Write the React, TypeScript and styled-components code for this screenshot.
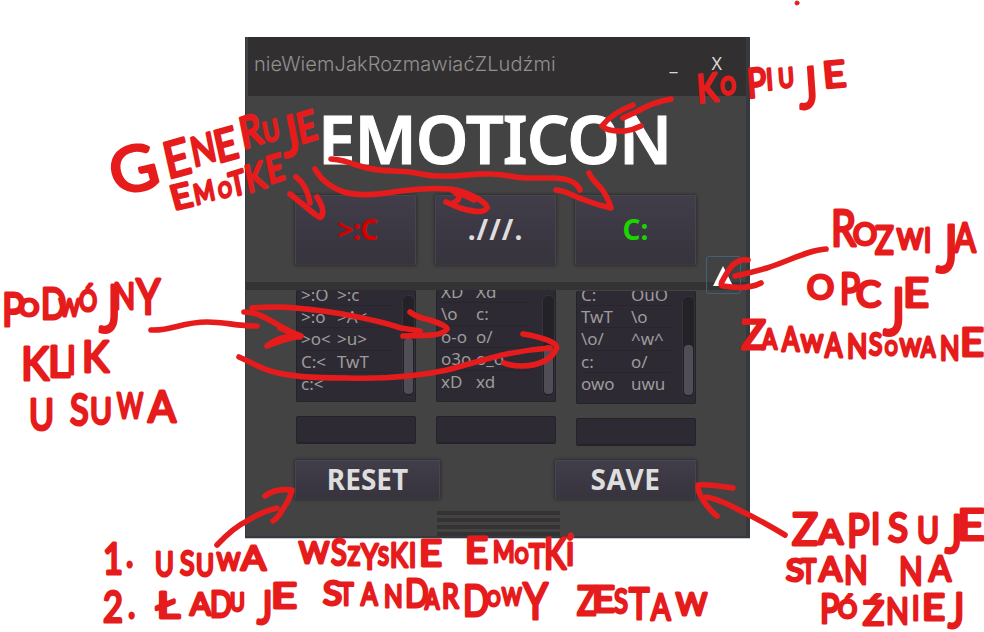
import React from "react";
import styled, { createGlobalStyle } from "styled-components";

const GlobalStyle = createGlobalStyle`
  html, body { margin: 0; background: #fff; overflow: hidden; }
  *, *::before, *::after { box-sizing: border-box; }
  button, input { font: inherit; padding: 0; margin: 0; outline: 0; }
`;

const Page = styled.main`
  position: relative;
  width: 984px;
  height: 632px;
  padding: 37px 0 0 245px;
  overflow: hidden;
  background: #fff;
  font-family: "Noto Sans", "Open Sans", sans-serif;
`;

const Window = styled.section`
  display: flex;
  flex-direction: column;
  width: 505px;
  height: 501px;
  background: #434343;
  border: solid #363940;
  border-width: 0 4px 2px 1px;
  box-shadow: 0 1px #c8cad0;
`;

const TitleBar = styled.header`
  display: flex;
  align-items: center;
  height: 59px;
  flex: none;
  padding: 0 24px 5px 6px;
  margin-left: 2px;
  background: #322f30;
`;

const Title = styled.h1`
  flex: 1;
  margin: 0;
  font: 300 20px/28px Inter, sans-serif;
  letter-spacing: 0.07px;
  color: #929090;
  white-space: nowrap;
`;

const WindowControl = styled.button<{ $gap?: number }>`
  margin: -3px ${(p) => p.$gap ?? 0}px 0 0;
  border: 0;
  background: none;
  color: #d8d8d8;
  font-size: 18px;
  line-height: 28px;
`;

const Headline = styled.output`
  display: block;
  height: 98px;
  padding-left: 72px;
  font-size: 67px;
  line-height: 84px;
  font-weight: 600;
  letter-spacing: -0.9px;
  color: #fff;
  -webkit-text-stroke: 1px #fff;
  white-space: nowrap;
`;

const MoodRow = styled.div`
  display: flex;
  gap: 19px;
  padding: 1px 0 0 49px;
  height: 88px;
`;

const PanelButton = styled.button<{ $w: number; $h: number; $color?: string; $spacing?: number; $nudge?: number }>`
  width: ${(p) => p.$w}px;
  height: ${(p) => p.$h}px;
  padding: 0 0 2px ${(p) => p.$nudge ?? 0}px;
  border: 1px solid #484551;
  border-bottom-color: #3a3742;
  border-radius: 2px;
  background: linear-gradient(#413d49, #37343e);
  box-shadow: 0 0 3px 1px rgba(25, 25, 25, 0.5);
  color: ${(p) => p.$color ?? "#dedede"};
  font-size: 28px;
  line-height: 34px;
  font-weight: 700;
  letter-spacing: ${(p) => p.$spacing ?? 0}px;
`;

const Divider = styled.div`
  position: relative;
  height: 8px;
  flex: none;
  background: #343232;
`;

const ExpandButton = styled.button`
  position: absolute;
  right: 5px;
  top: -26px;
  width: 35px;
  height: 38px;
  border: 1px solid #41617b;
  border-radius: 3px;
  background: rgba(67, 67, 67, 0.2);
  svg { display: block; margin: 2px 0 0 6px; }
`;

const Lists = styled.div`
  display: flex;
  gap: 20px;
  height: 171px;
  padding-left: 50px;
`;

const Column = styled.div<{ $top: number }>`
  display: flex;
  flex-direction: column;
  gap: 14px;
  width: 120px;
  padding-top: ${(p) => p.$top}px;
`;

const ListBox = styled.div<{ $h: number }>`
  display: flex;
  height: ${(p) => p.$h}px;
  overflow: hidden;
  border: 1px solid #25232a;
  border-top: 0;
  border-radius: 2px;
  background: #2d2a33;
`;

const Items = styled.ul<{ $shift: number; $first: number }>`
  flex: 1;
  margin: ${(p) => p.$shift}px 0 0 4px;
  padding: 0;
  list-style: none;
  li {
    display: grid;
    grid-template-columns: ${(p) => p.$first}px 1fr;
    height: 22.4px;
    border-bottom: 1px solid #28262c;
    color: #9d9b9b;
    font-size: 17px;
    line-height: 22px;
    white-space: nowrap;
  }
  li:last-child { border-color: transparent; }
`;

const Track = styled.div<{ $h: number }>`
  width: 13px;
  height: 102px;
  margin: 5px 0 0 11px;
  padding: 0 1px 2px;
  display: flex;
  align-items: flex-end;
  border: 1px solid #35323a;
  border-radius: 6px;
  background: #232226;
  &::after {
    content: "";
    width: 100%;
    height: ${(p) => p.$h}px;
    border-radius: 4px;
    background: #504d57;
  }
`;

const Entry = styled.input`
  width: 120px;
  height: 28px;
  border: 1px solid #25232a;
  border-bottom-width: 2px;
  border-radius: 2px;
  background: #2d2a33;
`;

const Actions = styled.div`
  display: flex;
  justify-content: space-between;
  padding: 0 50px 0 49px;
`;

const Grip = styled.div`
  width: 123px;
  height: 25px;
  margin: 12px 0 0 191px;
  background: repeating-linear-gradient(#343233 0 4px, #434343 4px 7px);
`;

const Annotations = styled.svg`
  position: absolute;
  inset: 0;
  pointer-events: none;
  fill: none;
  stroke: #e61c1c;
  stroke-linecap: round;
  stroke-linejoin: round;
  stroke-width: 5.6px;
`;

const Handwriting = styled.text`
  fill: #e61c1c;
  stroke-width: 3px;
  font-family: Lato, sans-serif;
  font-weight: 400;
`;

// Horizontal compression that makes the capitals as narrow as marker lettering.
const NARROW = 0.8;

// Every letter: character, left edge, bottom edge, height, and a width where it is drawn wide.
type Letter = [string, number, number, number, number?];
const notes: { tilt?: number; letters: Letter[] }[] = [
  { tilt: -5, letters: [["K", 698, 105, 31], ["O", 721, 97, 20], ["P", 748, 100, 32], ["I", 767, 92, 24], ["U", 779, 90, 22], ["J", 800, 111, 44], ["E", 824, 90, 29, 23]] },
  { tilt: -14, letters: [["G", 116, 198, 48, 48], ["E", 168, 181, 39, 26], ["N", 194, 169, 32], ["E", 218, 165, 35, 23], ["R", 243, 151, 34], ["U", 265, 145, 23], ["J", 285, 160, 43], ["E", 300, 146, 33]] },
  { tilt: -14, letters: [["E", 174, 212, 27, 21], ["M", 196, 207, 23], ["O", 220, 201, 18], ["T", 232, 199, 27], ["K", 248, 195, 30], ["E", 269, 186, 30]] },
  { letters: [["R", 831, 248, 39], ["O", 853, 247, 25, 24], ["Z", 875, 256, 31], ["W", 897, 251, 22, 26], ["I", 924, 254, 26], ["J", 936, 274, 50], ["A", 954, 254, 32]] },
  { letters: [["O", 807, 301, 26, 27], ["P", 840, 306, 33], ["C", 856, 309, 29, 25], ["J", 883, 337, 51], ["E", 903, 309, 32, 26]] },
  { letters: [["Z", 741, 351, 32, 25], ["A", 762, 351, 23], ["A", 782, 353, 26], ["W", 801, 354, 20, 22], ["A", 825, 359, 26], ["N", 847, 360, 27], ["S", 869, 357, 25], ["O", 885, 357, 17], ["W", 900, 358, 19, 21], ["A", 921, 359, 22], ["N", 940, 362, 26], ["E", 960, 358, 31, 24]] },
  { letters: [["P", 2, 328, 37], ["O", 19, 318, 19, 20], ["D", 41, 321, 33], ["W", 59, 318, 20, 21], ["Ó", 79, 313, 24, 18], ["J", 99, 334, 50], ["N", 113, 311, 29], ["Y", 136, 316, 38]] },
  { letters: [["K", 21, 382, 37, 28], ["L", 48, 379, 34, 22], ["I", 67, 376, 31], ["K", 82, 374, 34, 27]] },
  { letters: [["U", 29, 432, 33, 25], ["S", 70, 427, 34], ["U", 90, 426, 30], ["W", 117, 420, 28, 26], ["A", 148, 424, 34, 28]] },
  { letters: [["1", 103, 576, 34], [".", 126, 569, 31]] },
  { letters: [["U", 155, 578, 26], ["S", 180, 577, 27], ["U", 196, 578, 25], ["W", 217, 572, 20, 23], ["A", 241, 572, 27, 25]] },
  { letters: [["W", 299, 565, 24, 30], ["S", 331, 567, 29], ["Z", 348, 567, 21], ["Y", 361, 571, 28], ["S", 378, 567, 21], ["K", 390, 569, 27], ["I", 409, 569, 26], ["E", 419, 568, 29, 23]] },
  { letters: [["E", 465, 565, 29, 23], ["M", 493, 564, 24], ["O", 515, 565, 18], ["T", 529, 570, 27], ["K", 544, 571, 33], ["i", 566, 567, 34]] },
  { letters: [["2", 103, 624, 34], [".", 128, 620, 31]] },
  { letters: [["Ł", 156, 620, 29, 24], ["A", 190, 617, 25, 21], ["D", 210, 619, 29], ["U", 230, 613, 21], ["J", 257, 626, 36], ["E", 271, 610, 28, 26]] },
  { letters: [["S", 323, 607, 26, 19], ["T", 339, 607, 25], ["A", 361, 607, 25], ["N", 384, 609, 25], ["D", 405, 609, 31], ["A", 425, 611, 22], ["R", 442, 610, 27], ["D", 463, 618, 34], ["O", 487, 608, 18], ["W", 502, 607, 20], ["Y", 523, 621, 39]] },
  { letters: [["Z", 577, 617, 32], ["E", 592, 614, 29, 23], ["S", 614, 615, 26], ["T", 629, 621, 34], ["A", 651, 622, 29], ["W", 676, 617, 25, 31]] },
  { letters: [["Z", 792, 547, 35, 26], ["A", 818, 546, 27, 25], ["P", 847, 549, 37], ["I", 871, 546, 33], ["S", 888, 544, 32, 20], ["U", 917, 545, 30], ["J", 945, 555, 40], ["E", 957, 542, 34, 28]] },
  { letters: [["S", 786, 583, 25, 18], ["T", 801, 585, 26], ["A", 819, 583, 26, 23], ["N", 844, 586, 31]] },
  { letters: [["N", 899, 587, 31], ["A", 929, 583, 28, 22]] },
  { letters: [["P", 820, 625, 32], ["Ó", 838, 620, 21, 19], ["Ź", 863, 627, 27, 21], ["N", 886, 626, 30], ["I", 912, 622, 27], ["E", 922, 622, 29, 23], ["J", 948, 630, 38]] },
];

const arrows = [
  "M671 99Q651 103 638 111L623 118",
  "M633 105Q612 113 602 126Q608 132 625 131Q633 130 641 126",
  "M331 159Q344 160 356 165C378 172 389 170 410 172C425 174 426 176 440 176C460 177 475 173 490 174C508 174 511 178 527 178L552 178C569 178 577 182 580 190",
  "M556 190C565 190 570 195 582 199Q597 205 611 208Q607 195 600 187Q590 177 589 173",
  "M315 169C321 180 332 188 344 192C360 197 383 194 400 191C420 188 435 188 450 189C466 191 488 202 487 208C484 214 469 211 460 208L446 202",
  "M452 190Q465 198 453 203M453 190L474 200",
  "M296 177Q307 185 310 203",
  "M290 194L306 207Q320 219 321 217Q326 211 317 197",
  "M826 249C808 250 789 261 767 268Q750 273 735 276",
  "M748 260C735 258 729 269 724 278Q719 286 723 286Q748 290 761 283",
  "M151 330C172 331 181 322 207 322C225 322 236 326 257 326",
  "M244 312C264 312 276 327 301 336Q284 339 267 346Q282 334 300 337L280 328",
  "M252 308C284 305 305 309 330 312C361 317 386 323 401 328L420 331",
  "M410 312Q416 317 430 320Q451 327 446 330C440 337 421 335 403 336",
  "M239 357Q248 361 260 367C283 378 321 378 347 378C385 379 415 377 447 370C482 361 506 351 550 348",
  "M523 334C542 337 560 343 556 349C552 360 537 366 522 366Q511 366 504 363",
  "M217 545Q234 527 247 521Q263 511 277 508",
  "M265 496Q275 488 292 490Q289 501 284 507Q279 517 273 521",
  "M785 535Q760 520 739 510Q719 499 706 497",
  "M733 488Q706 484 698 485C697 494 708 509 717 516",
];

const columns = [
  { top: 0, height: 112, shift: -6, first: 36, thumb: 56, items: [[">:O", ">:c"], [">:o", ">A<"], [">o<", ">u>"], ["C:<", "TwT"], ["c:<", ""]] },
  { top: 0, height: 112, shift: -8.5, first: 35, thumb: 49, items: [["XD", "Xd"], ["\\o", "c:"], ["o-o", "o/"], ["o3o", "o_o"], ["xD", "xd"]] },
  { top: 1, height: 113, shift: -7, first: 50, thumb: 50, items: [["C:", "OuO"], ["TwT", "\\o"], ["\\o/", "^w^"], ["c:", "o/"], ["owo", "uwu"]] },
];

export default function App() {
  return (
    <Page>
      <GlobalStyle />
      <Window>
        <TitleBar>
          <Title>nieWiemJakRozmawiaćZLudźmi</Title>
          <WindowControl $gap={34}>_</WindowControl>
          <WindowControl>X</WindowControl>
        </TitleBar>
        <Headline>EMOTICON</Headline>
        <MoodRow>
          <PanelButton $w={121} $h={70} $color="#d40000" $nudge={4} $spacing={-0.6}>&gt;:C</PanelButton>
          <PanelButton $w={121} $h={70} $spacing={1}>.///.</PanelButton>
          <PanelButton $w={121} $h={70} $color="#1bd400">C:</PanelButton>
        </MoodRow>
        <Divider>
          <ExpandButton aria-label="Advanced">
            <svg width="20" height="20"><path d="M10 0L20 20H0Z" fill="#fff" /></svg>
          </ExpandButton>
        </Divider>
        <Lists>
          {columns.map((c, i) => (
            <Column key={i} $top={c.top}>
              <ListBox $h={c.height}>
                <Items $shift={c.shift} $first={c.first}>
                  {c.items.map(([a, b], k) => (
                    <li key={k}><span>{a}</span><span>{b}</span></li>
                  ))}
                </Items>
                <Track $h={c.thumb} />
              </ListBox>
              <Entry />
            </Column>
          ))}
        </Lists>
        <Actions>
          <PanelButton $w={145} $h={39}>RESET</PanelButton>
          <PanelButton $w={141} $h={39} $spacing={0.6}>SAVE</PanelButton>
        </Actions>
        <Grip />
      </Window>
      <Annotations width="984" height="632" viewBox="0 0 984 632">
        {arrows.map((d) => <path key={d} d={d} />)}
        <circle cx="797" cy="3" r="2" fill="#e61c1c" strokeWidth="1" />
        {notes.map((n, i) => (
          <Handwriting key={i} transform={`scale(${NARROW} 1)`}>
            {n.letters.map(([ch, x, y, h, w], k) => (
              <tspan
                key={k}
                x={x / NARROW}
                y={y - 2}
                rotate={n.tilt ?? 0}
                fontSize={(h - 3) / 0.72}
                textLength={w ? w / NARROW : undefined}
                lengthAdjust={w ? "spacingAndGlyphs" : undefined}
              >
                {ch}
              </tspan>
            ))}
          </Handwriting>
        ))}
      </Annotations>
    </Page>
  );
}
